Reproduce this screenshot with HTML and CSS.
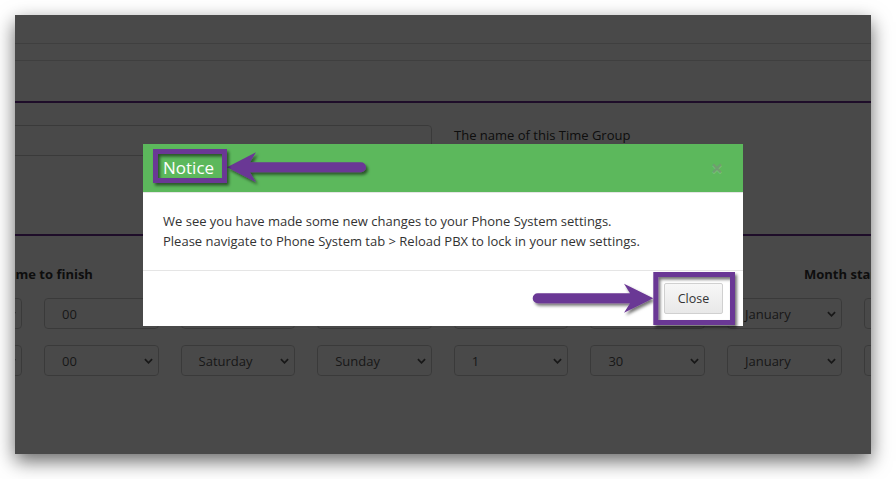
FILE: index.html
```html
<!DOCTYPE html>
<html>
<head>
<meta charset="utf-8">
<link rel="stylesheet" href="styles.css">
</head>
<body>
<div class="window">
  <div class="page">
    <div class="topbar"></div>
    <div class="subbar"></div>
    <div class="titlebar"></div>
    <section class="namegroup">
      <div class="input"></div>
      <span class="help">The name of this Time Group</span>
    </section>
    <section class="times">
      <div class="labels">
        <span class="lbl lbl-finish">Time to finish</span>
        <span class="lbl">Month start</span>
      </div>
      <div class="row">
        <div class="sel"><span>23</span><svg class="chev" viewBox="0 0 10 6"><path d="M1 1l4 4 4-4"/></svg></div>
        <div class="sel"><span>00</span><svg class="chev" viewBox="0 0 10 6"><path d="M1 1l4 4 4-4"/></svg></div>
        <div class="sel"><span>Monday</span><svg class="chev" viewBox="0 0 10 6"><path d="M1 1l4 4 4-4"/></svg></div>
        <div class="sel"><span>Friday</span><svg class="chev" viewBox="0 0 10 6"><path d="M1 1l4 4 4-4"/></svg></div>
        <div class="sel"><span>1</span><svg class="chev" viewBox="0 0 10 6"><path d="M1 1l4 4 4-4"/></svg></div>
        <div class="sel"><span>31</span><svg class="chev" viewBox="0 0 10 6"><path d="M1 1l4 4 4-4"/></svg></div>
        <div class="sel"><span>January</span><svg class="chev" viewBox="0 0 10 6"><path d="M1 1l4 4 4-4"/></svg></div>
        <div class="sel"><span>December</span><svg class="chev" viewBox="0 0 10 6"><path d="M1 1l4 4 4-4"/></svg></div>
      </div>
      <div class="row">
        <div class="sel"><span>23</span><svg class="chev" viewBox="0 0 10 6"><path d="M1 1l4 4 4-4"/></svg></div>
        <div class="sel"><span>00</span><svg class="chev" viewBox="0 0 10 6"><path d="M1 1l4 4 4-4"/></svg></div>
        <div class="sel"><span>Saturday</span><svg class="chev" viewBox="0 0 10 6"><path d="M1 1l4 4 4-4"/></svg></div>
        <div class="sel"><span>Sunday</span><svg class="chev" viewBox="0 0 10 6"><path d="M1 1l4 4 4-4"/></svg></div>
        <div class="sel"><span>1</span><svg class="chev" viewBox="0 0 10 6"><path d="M1 1l4 4 4-4"/></svg></div>
        <div class="sel"><span>30</span><svg class="chev" viewBox="0 0 10 6"><path d="M1 1l4 4 4-4"/></svg></div>
        <div class="sel"><span>January</span><svg class="chev" viewBox="0 0 10 6"><path d="M1 1l4 4 4-4"/></svg></div>
        <div class="sel"><span>December</span><svg class="chev" viewBox="0 0 10 6"><path d="M1 1l4 4 4-4"/></svg></div>
      </div>
    </section>
  </div>
  <div class="backdrop"></div>
  <div class="modal">
    <div class="modal-header">
      <span class="modal-title">Notice</span>
      <span class="close">&times;</span>
    </div>
    <div class="modal-body">
      We see you have made some new changes to your Phone System settings.<br>
      Please navigate to Phone System tab &gt; Reload PBX to lock in your new settings.
    </div>
    <div class="modal-footer">
      <button class="btn">Close</button>
    </div>
  </div>
  <svg class="annot" width="856" height="439" viewBox="0 0 856 439">
    <defs>
      <filter id="sh" x="-20%" y="-40%" width="140%" height="180%">
        <feDropShadow dx="2" dy="2.5" stdDeviation="1.6" flood-color="#000" flood-opacity="0.55"/>
      </filter>
    </defs>
    <g filter="url(#sh)" fill="#6b3795">
      <path d="M212,152.3 L241,137.3 L235,147.3 L346,147.3 A5,5 0 0 1 346,157.3 L235,157.3 L241,167.3 Z"/>
      <path d="M638.3,283.3 L609,268.8 L615,278.3 L522.7,278.3 A5,5 0 0 0 522.7,288.3 L615,288.3 L609,297.8 Z"/>
    </g>
    <g filter="url(#sh)" fill="none" stroke="#6b3795" stroke-width="5">
      <rect x="140.5" y="136.5" width="69" height="29"/>
      <rect x="640.8" y="259.5" width="76.7" height="48"/>
    </g>
  </svg>
</div>
</body>
</html>
```

FILE: styles.css
```css
html, body {
  margin: 0;
  padding: 0;
  background: #ffffff;
}
body {
  padding: 15px 0 40px 15px;
  font-family: "Open Sans", "Liberation Sans", sans-serif;
  color: #333;
}
.window {
  position: relative;
  width: 856px;
  height: 439px;
  overflow: hidden;
  background: #ffffff;
  box-shadow: 0 7px 18px rgba(0, 0, 0, 0.6);
}
.page {
  width: 856px;
}
.topbar {
  height: 28px;
  border-bottom: 1px solid #dcdcdc;
}
.subbar {
  height: 16px;
  border-bottom: 1px solid #dcdcdc;
}
.titlebar {
  height: 40px;
  border-bottom: 2px solid #6b2d8f;
}
.namegroup {
  display: flex;
  align-items: flex-start;
  padding: 22px 0 78px 0;
  border-bottom: 2px solid #6b2d8f;
}
.input {
  width: 465px;
  height: 29px;
  margin-left: -50px;
  border: 1px solid #ccc;
  border-radius: 4px;
  flex: none;
}
.help {
  margin-left: 22px;
  font-size: 13px;
  line-height: 20px;
  color: #333;
}
.times {
  padding-top: 28px;
}
.labels {
  display: flex;
  font-size: 13px;
  line-height: 20px;
  font-weight: 700;
  color: #333;
  white-space: nowrap;
}
.lbl-finish {
  margin-left: -11px;
  width: 800px;
  flex: none;
}
.row {
  display: flex;
  gap: 22px;
  margin-left: -107.6px;
  margin-top: 14px;
}
.row + .row {
  margin-top: 16px;
}
.sel {
  flex: none;
  box-sizing: border-box;
  width: 114.6px;
  height: 31px;
  border: 1px solid #ccc;
  border-radius: 4px;
  display: flex;
  align-items: center;
  justify-content: space-between;
  padding: 0 5px 0 17px;
  font-size: 13px;
  color: #555;
}
.chev {
  width: 9px;
  height: 6px;
  fill: none;
  stroke: #555;
  stroke-width: 2;
}
.backdrop {
  position: absolute;
  left: 0;
  top: 0;
  right: 0;
  bottom: 0;
  background: rgba(0, 0, 0, 0.714);
}
.modal {
  position: absolute;
  left: 128px;
  top: 129px;
  width: 600px;
  background: #fff;
}
.modal-header {
  height: 48px;
  background: #5cb85c;
  border-bottom: 1px solid #e5e5e5;
  display: flex;
  align-items: center;
  justify-content: space-between;
  padding: 0 20px;
}
.modal-title {
  font-size: 17px;
  color: #fff;
  line-height: 20px;
}
.close {
  font-size: 21px;
  font-weight: 700;
  line-height: 1;
  color: #6f9f6f;
  text-shadow: 0 1px 0 rgba(255, 255, 255, 0.2);
}
.modal-body {
  padding: 18px 20px 19px 20px;
  font-size: 13px;
  line-height: 20px;
  color: #333;
}
.modal-footer {
  border-top: 1px solid #e5e5e5;
  padding: 12px 20px;
  display: flex;
  justify-content: flex-end;
}
.btn {
  height: 31px;
  width: 59px;
  padding: 0;
  font-family: "Open Sans", "Liberation Sans", sans-serif;
  font-size: 12.5px;
  color: #333;
  background: linear-gradient(to bottom, #f7f7f7, #e8e8e8);
  border: 1px solid #d0d0d0;
  border-radius: 2px;
}
.annot {
  position: absolute;
  left: 0;
  top: 0;
  pointer-events: none;
}
```
